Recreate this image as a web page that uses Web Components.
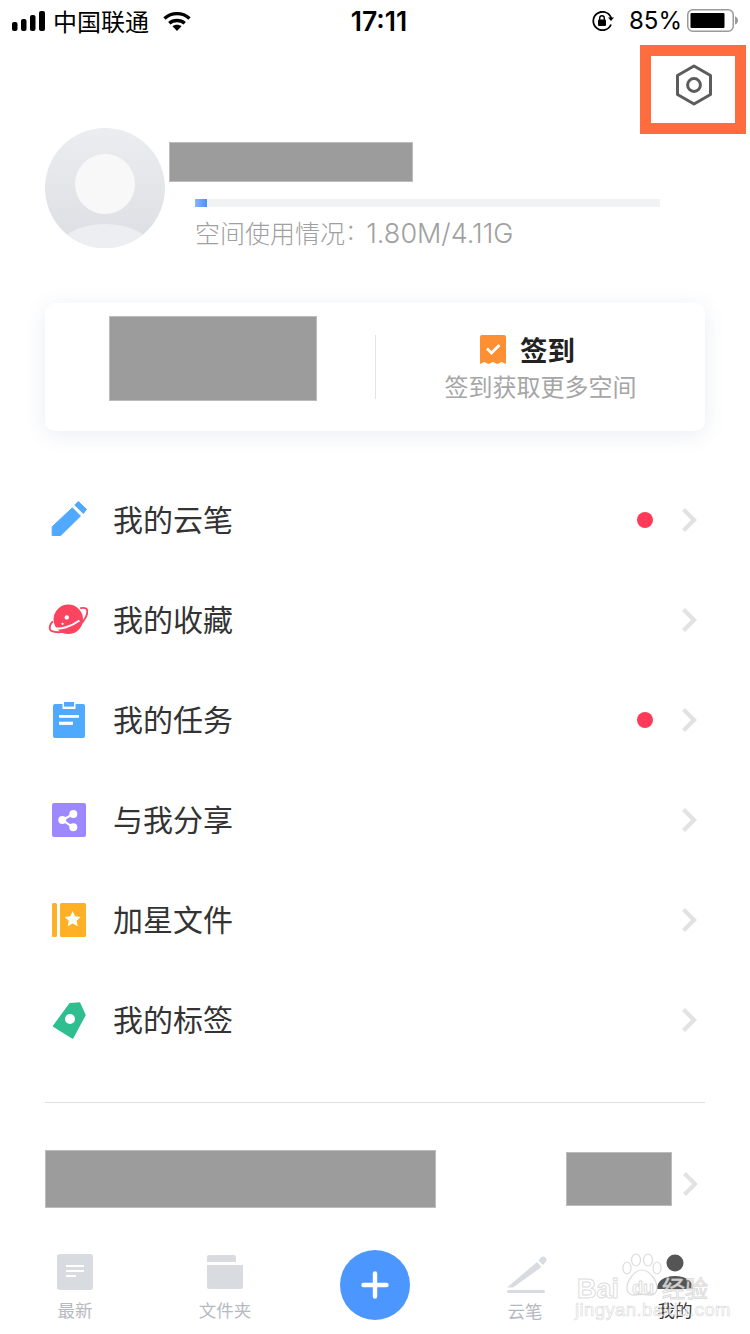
<!DOCTYPE html>
<html lang="zh">
<head>
<meta charset="utf-8">
<title>我的</title>
<style>
  html, body { margin: 0; padding: 0; background: #fff; }
  body { font-family: Inter, "Noto Sans CJK SC", sans-serif; }
</style>
</head>
<body>
<app-screen>
  <status-bar></status-bar>
  <settings-mark></settings-mark>
  <profile-head></profile-head>
  <checkin-card></checkin-card>
  <menu-list>
    <menu-row label="我的云笔" dot>
      <svg slot="icon" width="40" height="40" viewBox="0 0 40 40" fill="#4fa9ff" stroke="#4fa9ff" stroke-width="1" stroke-linejoin="round">
        <path d="M30.3 1.5L38.5 9.3 35.3 13.5 26.8 5z"/>
        <path d="M24.3 7.8L32.5 16 12.7 35.5 4.2 35.5 4.2 26.7z"/>
      </svg>
    </menu-row>
    <menu-row label="我的收藏">
      <svg slot="icon" width="40" height="40" viewBox="0 0 42 40">
        <circle cx="21.3" cy="19.3" r="15.5" fill="#fb4560"/>
        <path d="M6.5 28.5C13 30.5 24 27 33 20.5" fill="none" stroke="#fff" stroke-width="2.2"/>
        <path d="M4.5 22C1 26 1 30 3.5 31.5 10 34.5 24 32 32 26.5 39 21 43 12 40.5 8.5 39.500 7.500 37 7 34.500 7.500" fill="none" stroke="#fb4560" stroke-width="2" stroke-linecap="round"/>
        <circle cx="19.7" cy="17.3" r="2.3" fill="#fff"/>
        <circle cx="15.3" cy="24" r="1.2" fill="#fff"/>
      </svg>
    </menu-row>
    <menu-row label="我的任务" dot>
      <svg slot="icon" width="40" height="40" viewBox="0 0 40 40">
        <rect x="5" y="4" width="32" height="34" rx="2" fill="#4fa9ff"/>
        <rect x="14.5" y="2" width="13" height="7" fill="#fff"/>
        <rect x="16" y="2" width="10" height="4.6" fill="#4fa9ff"/>
        <rect x="11" y="15" width="20" height="2.8" fill="#fff"/>
        <rect x="11" y="21.7" width="14" height="3.2" fill="#fff"/>
      </svg>
    </menu-row>
    <menu-row label="与我分享">
      <svg slot="icon" width="40" height="40" viewBox="0 0 40 40">
        <rect x="4" y="3" width="34" height="34" rx="2" fill="#9d88ff"/>
        <path d="M25.3 14L14.3 20 25.3 27.3" fill="none" stroke="#fff" stroke-width="2"/>
        <circle cx="25.3" cy="14" r="4" fill="#fff"/>
        <circle cx="14.3" cy="20" r="4" fill="#fff"/>
        <circle cx="25.3" cy="27.3" r="4" fill="#fff"/>
      </svg>
    </menu-row>
    <menu-row label="加星文件">
      <svg slot="icon" width="40" height="40" viewBox="0 0 40 40">
        <rect x="4" y="3" width="5" height="34" rx="1.5" fill="#ffb024"/>
        <rect x="12" y="3" width="26" height="34" rx="1.5" fill="#ffb024"/>
        <path d="M24.7 11l2.4 5.2 5.6.7-4.1 3.8 1.1 5.6-5-2.8-5 2.8 1.1-5.6-4.1-3.8 5.6-.7z" fill="#fff"/>
      </svg>
    </menu-row>
    <menu-row label="我的标签">
      <svg slot="icon" width="40" height="40" viewBox="0 0 40 40">
        <path d="M5.5 26.2L22 3.8 31.5 3 37 15 24.7 38z" fill="#2fbf8f" stroke="#2fbf8f" stroke-width="1.5" stroke-linejoin="round"/>
        <circle cx="22" cy="19" r="5" fill="#fff"/>
      </svg>
    </menu-row>
  </menu-list>
  <hidden-row></hidden-row>
  <tab-bar>
    <tab-item label="最新">
      <svg slot="icon" width="50" height="44" viewBox="0 0 50 44">
        <rect x="7" y="4" width="36" height="36" rx="3" fill="#d8dbe0"/>
        <rect x="16" y="15" width="18" height="2" fill="#fff"/>
        <rect x="16" y="20" width="18" height="2" fill="#fff"/>
        <rect x="16" y="25" width="10" height="2" fill="#fff"/>
      </svg>
    </tab-item>
    <tab-item label="文件夹">
      <svg slot="icon" width="50" height="44" viewBox="0 0 50 44" fill="#d8dbe0">
        <path d="M7 7a2 2 0 0 1 2-2h25a2 2 0 0 1 2 2v5H7z"/>
        <path d="M7 15h36v22a2 2 0 0 1-2 2H9a2 2 0 0 1-2-2z"/>
      </svg>
    </tab-item>
    <tab-item>
      <svg slot="icon" width="70" height="70" viewBox="0 0 70 70">
        <circle cx="35" cy="35" r="35" fill="#4c96ff"/>
        <path d="M23.5 35h23M35 23.5v23" stroke="#fff" stroke-width="4.4" stroke-linecap="round"/>
      </svg>
    </tab-item>
    <tab-item label="云笔" style="--label-top: 5px">
      <svg slot="icon" width="50" height="44" viewBox="0 0 50 44" fill="#d8dbe0">
        <path d="M7 37.5L37 12 41.5 17 13 37.5z"/>
        <path d="M38.5 10.5l2.5-3a3 3 0 0 1 4.5 0 3 3 0 0 1 .5 4l-3 3.5z"/>
        <rect x="7" y="40" width="38" height="3" rx="1.5"/>
      </svg>
    </tab-item>
    <tab-item label="我的" active>
      <svg slot="icon" width="50" height="44" viewBox="0 0 50 44" fill="#555">
        <circle cx="25" cy="13" r="8.5"/>
        <path d="M7 39c0-8 7-13 18-13s18 5 18 13z"/>
      </svg>
    </tab-item>
  </tab-bar>
  <baidu-mark></baidu-mark>
</app-screen>

<script>
class AppScreen extends HTMLElement {
  constructor() {
    super();
    this.attachShadow({ mode: "open" }).innerHTML = `
    <style>
    :host {
      display: flex;
      flex-direction: column;
      position: relative;
      width: 750px;
      height: 1334px;
      overflow: hidden;
      background: #fff;
      font-family: Inter, "Noto Sans CJK SC", sans-serif;
    }
    </style>
    <slot></slot>`;
  }
}

class StatusBar extends HTMLElement {
  constructor() {
    super();
    this.attachShadow({ mode: "open" }).innerHTML = `
    <style>
    :host {
      display: grid;
      grid-template-columns: 1fr auto 1fr;
      align-items: center;
      height: 45px;
      flex: none;
      padding: 0 12px 4px;
      box-sizing: border-box;
      color: #000;
      font-size: 24px;
      line-height: 30px;
    }
    .left, .right { display: flex; align-items: center; }
    .right { justify-content: flex-end; }
    .carrier { margin: 0 14px 0 8px; font-family: "Noto Sans CJK SC", sans-serif; }
    .time { font-weight: 600; font-size: 26.5px; margin: 1px 0 0 8px; }
    .pct { margin: 0 5px 0 15px; }
    svg { display: block; }
    </style>
    <div class="left">
      <svg width="33" height="20" viewBox="0 0 33 20" fill="#000">
        <rect x="0" y="11" width="5.5" height="9" rx="2"/>
        <rect x="9" y="8" width="5.5" height="12" rx="2"/>
        <rect x="18" y="4" width="5.5" height="16" rx="2"/>
        <rect x="27" y="0" width="6" height="20" rx="2"/>
      </svg>
      <span class="carrier">中国联通</span>
      <svg width="28" height="20" viewBox="0 0 28 20" fill="none" stroke="#000" stroke-width="3.4">
        <path d="M1.5 7.5C8.5 1 19.5 1 26.5 7.5"/>
        <path d="M6.3 12.3C10.5 8.5 17.5 8.5 21.7 12.3"/>
        <path d="M14 20l-4.5-4.7c2.5-2 6.5-2 9 0z" fill="#000" stroke="none"/>
      </svg>
    </div>
    <div class="time">17:11</div>
    <div class="right">
      <svg width="22" height="20" viewBox="0 0 22 20" fill="none" stroke="#000" stroke-width="1.8">
        <path d="M19 13.5A9.2 9.2 0 1 1 19.2 7"/>
        <path d="M22 6.5l-3 3.5-3-3.5z" fill="#000" stroke="none"/>
        <rect x="6" y="8.5" width="8" height="6.5" rx="1" fill="#000" stroke="none"/>
        <path d="M7.7 9V7a2.3 2.3 0 0 1 4.6 0v2" stroke-width="1.4"/>
      </svg>
      <span class="pct">85%</span>
      <svg width="51" height="23" viewBox="0 0 51 23">
        <rect x=".75" y=".75" width="45.5" height="21.5" rx="5" fill="none" stroke="#9a9a9a" stroke-width="1.5"/>
        <rect x="3.5" y="4" width="34" height="15" rx="1" fill="#000"/>
        <path d="M48 7.5c2 .5 3 2 3 4s-1 3.5-3 4z" fill="#9a9a9a"/>
      </svg>
    </div>`;
  }
}

class SettingsMark extends HTMLElement {
  constructor() {
    super();
    this.attachShadow({ mode: "open" }).innerHTML = `
    <style>
    :host {
      position: absolute;
      left: 640px;
      top: 45px;
      width: 106px;
      height: 89px;
      box-sizing: border-box;
      border: 11px solid #ff6d3f;
      display: flex;
      justify-content: center;
    }
    svg { display: block; margin: 8px 0 0 1px; }
    </style>
    <svg width="40" height="42" viewBox="0 0 40 42" fill="none" stroke="#5c5c5c" stroke-width="3" stroke-linejoin="round">
      <path d="M20 2L36.5 11.5V30.5L20 40 3.5 30.5V11.5z"/>
      <circle cx="20" cy="21" r="6.4"/>
    </svg>`;
  }
}

class RedactBlock extends HTMLElement {
  constructor() {
    super();
    this.attachShadow({ mode: "open" }).innerHTML = `
    <style>
    :host {
      display: block;
      flex: none;
      box-sizing: border-box;
      background: #9c9c9c;
      border: 1px solid #bcbcbc;
    }
    </style>`;
  }
}

class ProfileHead extends HTMLElement {
  constructor() {
    super();
    this.attachShadow({ mode: "open" }).innerHTML = `
    <style>
    :host {
      display: flex;
      flex: none;
      height: 120px;
      margin-top: 83px;
      padding-left: 45px;
    }
    svg { display: block; flex: none; }
    .info { margin-left: 4px; width: 491px; }
    redact-block { width: 244px; height: 40px; margin-top: 14px; }
    .track {
      width: 465px;
      height: 8px;
      margin: 17px 0 0 26px;
      background: #f1f2f3;
    }
    .fill {
      width: 12px;
      height: 8px;
      background: linear-gradient(90deg, #8ab5ff, #4c8dff);
    }
    .usage {
      margin: 10px 0 0 26px;
      font-size: 25px;
      line-height: 34px;
      font-weight: 300;
      color: #a0a0a0;
      white-space: nowrap;
    }
    .num { font-size: 27px; margin-left: 2px; word-spacing: 4px; }
    </style>
    <svg width="120" height="120" viewBox="0 0 120 120">
      <defs>
        <linearGradient id="av" x1="0" y1="0" x2="0" y2="1">
          <stop offset="0" stop-color="#ecedf0"/>
          <stop offset="1" stop-color="#dcdee3"/>
        </linearGradient>
        <clipPath id="round"><circle cx="60" cy="60" r="60"/></clipPath>
      </defs>
      <circle cx="60" cy="60" r="60" fill="url(#av)"/>
      <circle cx="60" cy="56" r="30" fill="#f8f8f9"/>
      <ellipse cx="60" cy="126" rx="50" ry="30" fill="#edeef1" clip-path="url(#round)"/>
    </svg>
    <div class="info">
      <redact-block></redact-block>
      <div class="track"><div class="fill"></div></div>
      <div class="usage">空间使用情况<span class="num">: 1.80M/4.11G</span></div>
    </div>`;
  }
}

class CheckinCard extends HTMLElement {
  constructor() {
    super();
    this.attachShadow({ mode: "open" }).innerHTML = `
    <style>
    :host {
      display: flex;
      flex: none;
      width: 660px;
      height: 128px;
      margin: 55px 0 0 45px;
      border-radius: 10px;
      background: #fff;
      box-shadow: 0 4px 22px rgba(60, 80, 140, .1);
    }
    .left { width: 330px; padding: 13px 0 0 64px; box-sizing: border-box; }
    redact-block { width: 208px; height: 85px; }
    .right {
      flex: 1;
      display: flex;
      flex-direction: column;
      align-items: center;
      font-family: "Noto Sans CJK SC", sans-serif;
    }
    .line { width: 1px; height: 64px; margin-top: 32px; background: #e4e4e4; }
    .head {
      display: flex;
      align-items: center;
      gap: 14px;
      margin: 29px 26px 0 0;
    }
    .head svg { display: block; }
    .title { font-size: 27.5px; line-height: 34px; font-weight: 700; color: #222; }
    .sub { font-size: 24px; line-height: 34px; margin-top: 3px; color: #a6a6a6; white-space: nowrap; }
    </style>
    <div class="left"><redact-block></redact-block></div>
    <div class="line"></div>
    <div class="right">
      <div class="head">
        <svg width="26" height="29" viewBox="0 0 26 29">
          <path d="M0 2a2 2 0 0 1 2-2h22a2 2 0 0 1 2 2v27l-4.300-2-4.300 2-4.400-2-4.400 2-4.300-2L0 29z" fill="#ff8f33"/>
          <path d="M7 13.5l4.5 4.5 8-8" fill="none" stroke="#fff" stroke-width="2.8"/>
        </svg>
        <span class="title">签到</span>
      </div>
      <div class="sub">签到获取更多空间</div>
    </div>`;
  }
}

class MenuList extends HTMLElement {
  constructor() {
    super();
    this.attachShadow({ mode: "open" }).innerHTML = `
    <style>
    :host { display: block; flex: none; margin-top: 39px; }
    </style>
    <slot></slot>`;
  }
}

class MenuRow extends HTMLElement {
  constructor() {
    super();
    const dot = this.hasAttribute("dot") ? `<span class="dot"></span>` : "";
    this.attachShadow({ mode: "open" }).innerHTML = `
    <style>
    :host {
      display: flex;
      align-items: center;
      height: 100px;
      padding: 0 53px 0 48px;
    }
    .label {
      flex: 1;
      margin: 0 0 4px 25px;
      font-family: "Noto Sans CJK SC", sans-serif;
      font-size: 30px;
      line-height: 40px;
      color: #333;
    }
    .dot {
      width: 16px;
      height: 16px;
      border-radius: 50%;
      background: #fd3a57;
      margin-right: 28px;
    }
    ::slotted(svg) { display: block; flex: none; }
    </style>
    <slot name="icon"></slot>
    <span class="label">${this.getAttribute("label")}</span>
    ${dot}
    <chevron-mark></chevron-mark>`;
  }
}

class ChevronMark extends HTMLElement {
  constructor() {
    super();
    this.attachShadow({ mode: "open" }).innerHTML = `
    <style>
    :host { display: block; flex: none; width: 16px; height: 24px; }
    svg { display: block; }
    </style>
    <svg width="16" height="24" viewBox="0 0 16 24" fill="none" stroke="#e2e2e2" stroke-width="4.2">
      <path d="M2.5 1.5L13 12 2.5 22.5"/>
    </svg>`;
  }
}

class HiddenRow extends HTMLElement {
  constructor() {
    super();
    this.attachShadow({ mode: "open" }).innerHTML = `
    <style>
    :host {
      display: block;
      flex: none;
      margin: 32px 45px 0;
      border-top: 1px solid #dfdfdf;
    }
    .row { display: flex; margin-top: 47px; }
    .one { width: 391px; height: 58px; }
    .two { width: 106px; height: 54px; margin: 2px 0 0 130px; }
    chevron-mark { margin: 22px 0 0 10px; }
    </style>
    <div class="row">
      <redact-block class="one"></redact-block>
      <redact-block class="two"></redact-block>
      <chevron-mark></chevron-mark>
    </div>`;
  }
}

class TabBar extends HTMLElement {
  constructor() {
    super();
    this.attachShadow({ mode: "open" }).innerHTML = `
    <style>
    :host {
      display: grid;
      grid-template-columns: repeat(5, 150px);
      flex: none;
      margin-top: auto;
      height: 88px;
      padding-top: 4px;
      box-sizing: border-box;
    }
    </style>
    <slot></slot>`;
  }
}

class TabItem extends HTMLElement {
  constructor() {
    super();
    const label = this.getAttribute("label");
    const color = this.hasAttribute("active") ? "#333" : "#b5bac1";
    this.attachShadow({ mode: "open" }).innerHTML = `
    <style>
    :host {
      display: flex;
      flex-direction: column;
      align-items: center;
    }
    ::slotted(svg) { display: block; flex: none; }
    .label {
      margin-top: var(--label-top, 4px);
      font-family: "Noto Sans CJK SC", sans-serif;
      font-size: 17.5px;
      line-height: 24px;
      color: ${color};
    }
    </style>
    <slot name="icon"></slot>
    ${label ? `<span class="label">${label}</span>` : ""}`;
  }
}

class BaiduMark extends HTMLElement {
  constructor() {
    super();
    this.attachShadow({ mode: "open" }).innerHTML = `
    <style>
    :host {
      position: absolute;
      left: 575px;
      top: 1252px;
      width: 140px;
      height: 70px;
      color: rgba(255, 255, 255, .72);
      font-family: "Liberation Sans", sans-serif;
      pointer-events: none;
    }
    span, .url {
      position: absolute;
      white-space: nowrap;
      -webkit-text-stroke: 1px rgba(205, 205, 205, .7);
    }
    .bai { left: 2px; top: 22px; font-size: 27px; line-height: 30px; font-weight: 700; }
    .du { left: 57px; top: 25px; font-size: 18px; line-height: 22px; font-weight: 700; }
    .cn { left: 87px; top: 20px; font-size: 23px; line-height: 30px; font-family: "Noto Sans CJK SC", sans-serif; }
    .url {
      left: 0;
      top: 48px;
      font-size: 18.5px;
      line-height: 20px;
      letter-spacing: .4px;
      -webkit-text-stroke-width: .7px;
    }
    svg { position: absolute; left: 47px; top: 1px; }
    </style>
    <svg width="40" height="44" viewBox="0 0 40 44" fill="rgba(255,255,255,.5)" stroke="rgba(205,205,205,.7)" stroke-width="1.2">
      <ellipse cx="5" cy="15" rx="4" ry="6"/>
      <ellipse cx="14" cy="7" rx="4.5" ry="6"/>
      <ellipse cx="26" cy="7" rx="4.5" ry="6"/>
      <ellipse cx="35" cy="15" rx="4" ry="6"/>
      <path d="M20 17C13 17 5 27 5 35c0 5 4 8 9 7 4-.7 8-.7 12 0 5 1 9-2 9-7 0-8-8-18-15-18z"/>
    </svg>
    <span class="bai">Bai</span>
    <span class="du">du</span>
    <span class="cn">经验</span>
    <div class="url">jingyan.baidu.com</div>`;
  }
}

customElements.define("redact-block", RedactBlock);
customElements.define("chevron-mark", ChevronMark);
customElements.define("app-screen", AppScreen);
customElements.define("status-bar", StatusBar);
customElements.define("settings-mark", SettingsMark);
customElements.define("profile-head", ProfileHead);
customElements.define("checkin-card", CheckinCard);
customElements.define("menu-list", MenuList);
customElements.define("menu-row", MenuRow);
customElements.define("hidden-row", HiddenRow);
customElements.define("tab-bar", TabBar);
customElements.define("tab-item", TabItem);
customElements.define("baidu-mark", BaiduMark);
</script>
</body>
</html>
